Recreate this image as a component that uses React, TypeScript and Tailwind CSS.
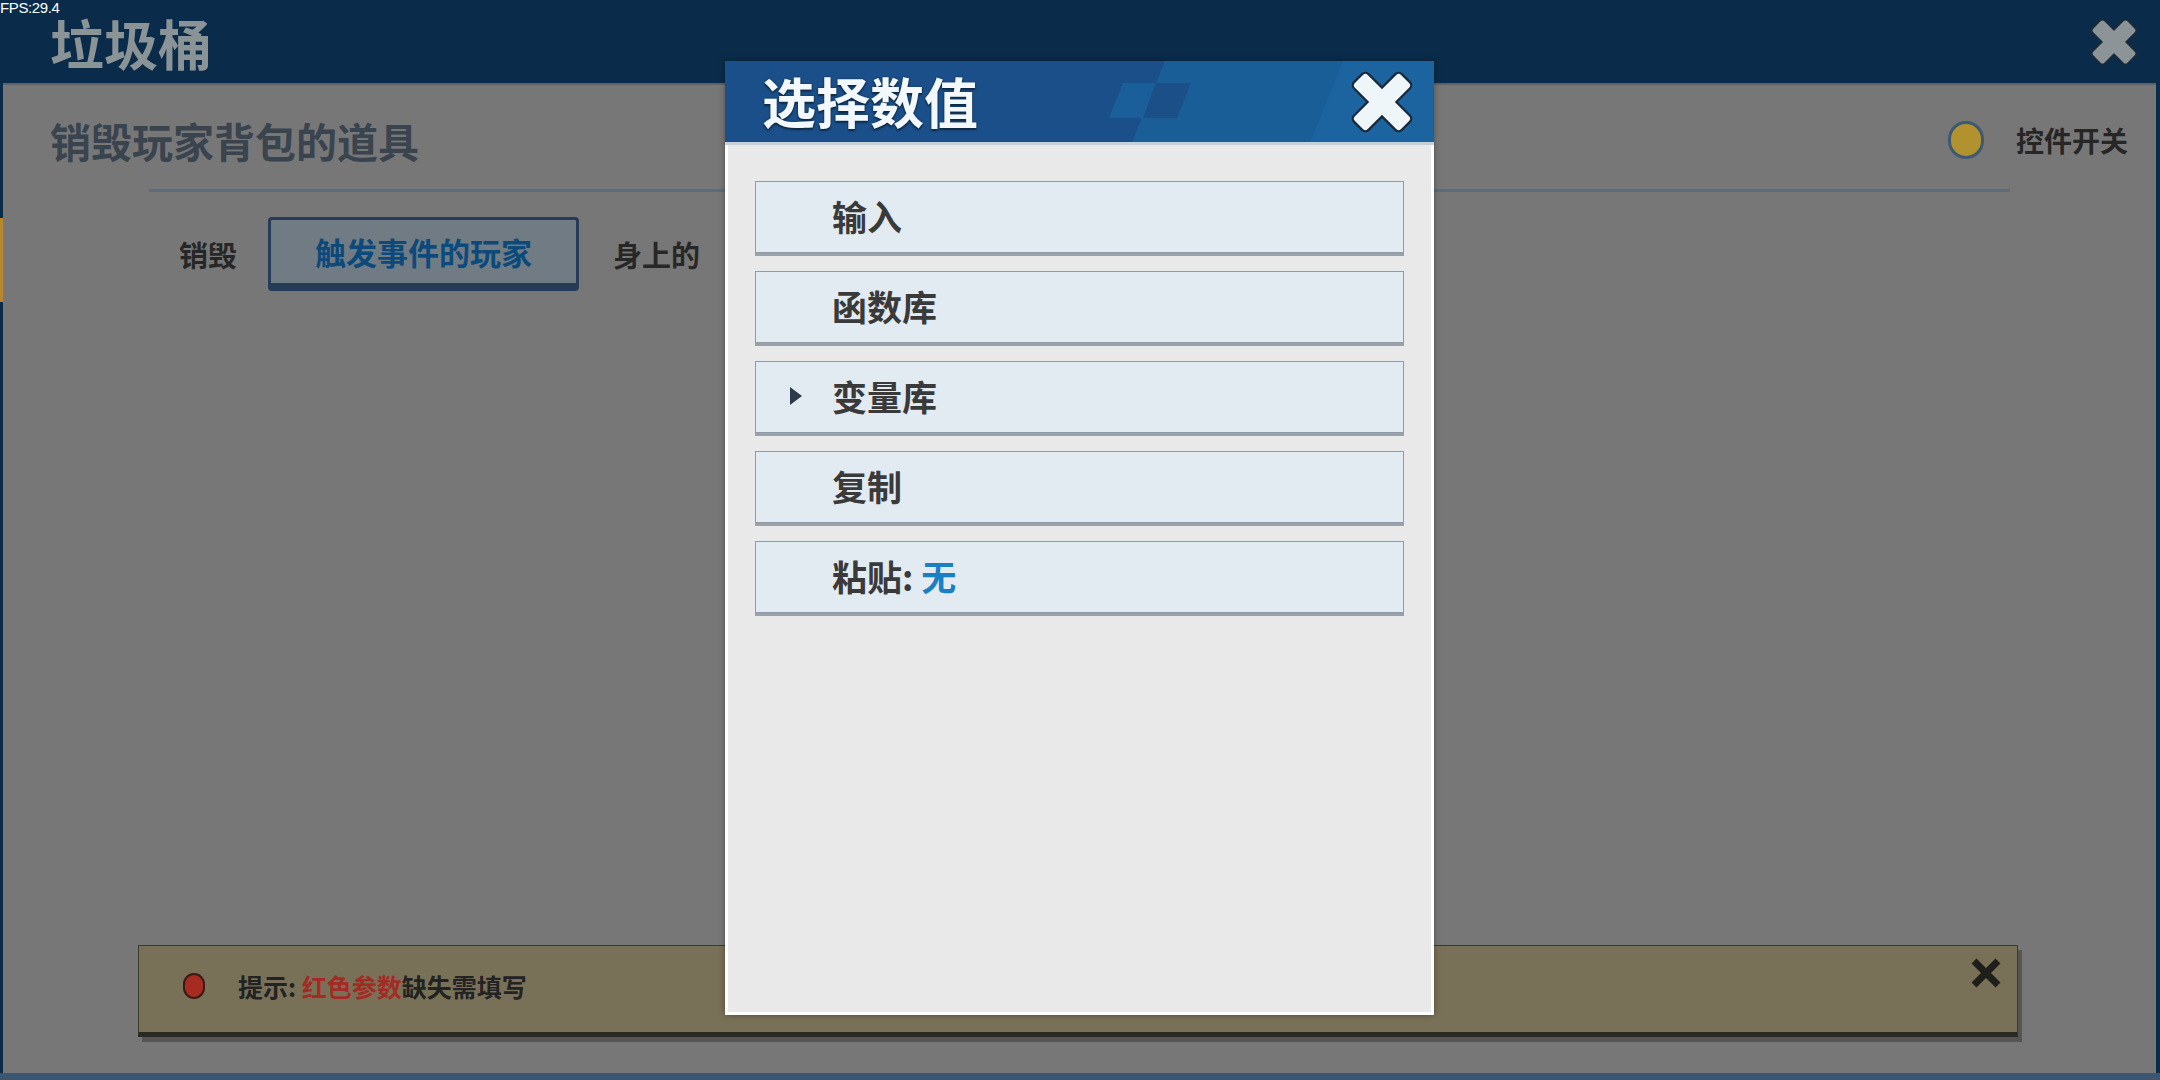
const cjk = { fontFamily: '"Noto Sans CJK SC", "Noto Sans", sans-serif' };

function ThickX({ size, fill, outline, arm }: { size: number; fill: string; outline: string; arm: number }) {
  const len = 52 * Math.SQRT2 - arm;
  const bar = (w: number, h: number, color: string, r: number) => (
    <>
      <rect x={30 - w / 2} y={30 - h / 2} width={w} height={h} rx={r} fill={color} transform="rotate(45 30 30)" />
      <rect x={30 - w / 2} y={30 - h / 2} width={w} height={h} rx={r} fill={color} transform="rotate(-45 30 30)" />
    </>
  );
  return (
    <svg width={size} height={size} viewBox="0 0 60 60">
      {bar(len + 4, arm + 4, outline, 5)}
      {bar(len, arm, fill, 3)}
    </svg>
  );
}

function MenuItem({ label, arrow, extra }: { label: string; arrow?: boolean; extra?: string }) {
  return (
    <div className="relative h-[72px] flex items-center border border-[#8e9caa] bg-[#e3ebf2] shadow-[0_3px_0_#9aa1a8]">
      {arrow && (
        <svg className="absolute left-[33px] top-[24px]" width="14" height="20" viewBox="0 0 14 20">
          <path d="M1 1 L13 10 L1 19 Z" fill="#2c3a4a" />
        </svg>
      )}
      <span className="pl-[76px] pb-[3px] text-[35px] font-bold text-[#3a3a3a] leading-none">
        {label}
        {extra && <span className="text-[#1a80c4]">{extra}</span>}
      </span>
    </div>
  );
}

export default function App() {
  return (
    <div className="relative w-[2160px] h-[1080px] overflow-hidden bg-[#0a2c4a] flex flex-col" style={cjk}>
      {/* header */}
      <div className="h-[83px] flex items-center justify-between pl-[50px] pr-[20px] shrink-0">
        <span className="text-[54px] font-bold text-[#8a9396] leading-none pt-[2px]">垃圾桶</span>
        <ThickX size={52} fill="#8d9497" outline="#1b2a36" arm={18} />
      </div>

      {/* main panel */}
      <div className="relative flex-1 ml-[3px] mr-[4px] mb-[7px] bg-[#777777] border-t-2 border-[#5e6166] flex flex-col">
        <div className="absolute left-[-3px] top-[133px] w-[3px] h-[84px] bg-[#b8862e]" />

        <div className="flex items-center justify-between pl-[47px] pr-[28px] pt-[29px] h-[81px]">
          <span className="text-[41px] font-bold text-[#39444e] leading-none">销毁玩家背包的道具</span>
          <div className="flex items-center gap-[32px]">
            <div className="w-[36px] h-[38px] rounded-full bg-[#b1922e] border-[3px] border-[#3d5a72]" />
            <span className="text-[28px] font-bold text-[#262626] leading-none">控件开关</span>
          </div>
        </div>

        <div className="mx-[146px] mt-[23px] h-[3px] bg-[#5f6b77]" />

        <div className="flex items-center mt-[25px] pl-[176px]">
          <span className="text-[29px] font-bold text-[#272727] leading-none">销毁</span>
          <div className="ml-[31px] w-[311px] h-[74px] flex items-center justify-center bg-[#707b83] border-[3px] border-b-[8px] border-[#253b57] rounded-[4px]">
            <span className="text-[31px] font-bold text-[#0b4a7b] leading-none">触发事件的玩家</span>
          </div>
          <span className="ml-[34px] text-[29px] font-bold text-[#272727] leading-none">身上的</span>
        </div>

        <div className="flex-1" />

        {/* hint bar */}
        <div className="ml-[135px] mr-[138px] mb-[36px] h-[92px] flex items-start justify-between bg-[#797157] border border-[#3b3a30] border-b-[5px] border-b-[#2a2a24] shadow-[4px_5px_0_#555555]">
          <div className="flex items-center h-full pb-[6px]">
            <div className="ml-[44px] w-[22px] h-[26px] rounded-full bg-[#a82b22] border-2 border-[#3a1a16]" />
            <span className="ml-[33px] text-[25px] font-bold text-[#232323] leading-none">
              提示: <span className="text-[#a52a24]">红色参数</span>缺失需填写
            </span>
          </div>
          <div className="mt-[10px] mr-[14px]">
            <svg width="34" height="34" viewBox="0 0 34 34">
              <path d="M5 5 L29 29 M29 5 L5 29" stroke="#1e1e1a" strokeWidth="7" fill="none" />
            </svg>
          </div>
        </div>
      </div>
      <div className="absolute left-0 right-0 bottom-0 h-[7px] bg-[#3c5570]" />

      {/* modal */}
      <div className="absolute left-[725px] top-[61px] w-[709px] h-[954px] flex flex-col shadow-[0_0_6px_rgba(0,0,0,0.35)]">
        <div className="relative h-[84px] shrink-0 border-b-[3px] border-[#c4d0da] flex items-center justify-between pl-[37px] pr-[18px] overflow-hidden">
          <svg className="absolute inset-0" width="709" height="84" viewBox="0 0 709 84">
            <rect width="709" height="84" fill="#1b4f89" />
            <path d="M440 0 L709 0 L709 84 L406 84 Z" fill="#1a5e98" />
            <path d="M618 0 L709 0 L709 84 L584 84 Z" fill="#1b64a0" />
            <path d="M398 22 L431 22 L418 57 L384 57 Z" fill="#1a5f99" />
            <path d="M431 22 L466 22 L452 57 L418 57 Z" fill="#1a4f88" />
          </svg>
          <span
            className="relative text-[54px] font-bold text-[#f2f8fb] leading-none pb-[2px]"
            style={{ textShadow: "0 0 2px #0d2a44, 0 2px 2px #0d2a44" }}
          >
            选择数值
          </span>
          <div className="relative">
            <ThickX size={68} fill="#eef6f9" outline="#17293a" arm={16} />
          </div>
        </div>
        <div className="flex-1 bg-[#e9e9e9] border-x-[3px] border-b-[3px] border-white px-[27px] pt-[36px] flex flex-col gap-[18px]">
          <MenuItem label="输入" />
          <MenuItem label="函数库" />
          <MenuItem label="变量库" arrow />
          <MenuItem label="复制" />
          <MenuItem label="粘贴: " extra="无" />
        </div>
      </div>

      <span className="absolute left-0 top-0 text-[15px] text-white leading-none tracking-tight" style={{ fontFamily: '"Liberation Sans", sans-serif' }}>
        FPS:29.4
      </span>
    </div>
  );
}
